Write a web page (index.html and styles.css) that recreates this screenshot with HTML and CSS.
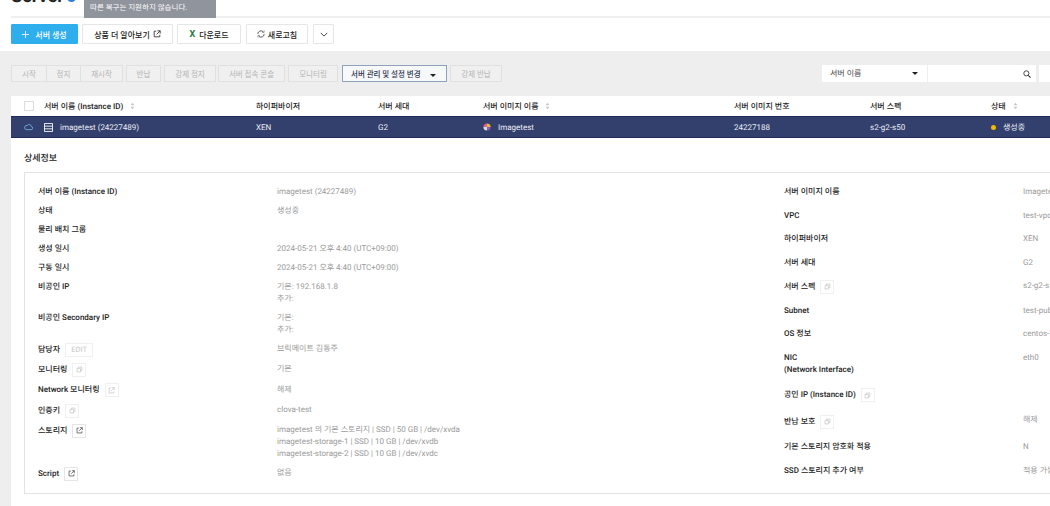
FILE: index.html
```html
<!DOCTYPE html>
<html lang="ko">
<head>
    <meta charset="UTF-8">
    <meta name="viewport" content="width=device-width, initial-scale=1.0">
    <title>Server</title>
    <link rel="stylesheet" href="styles.css">
</head>
<body>
    <svg class="sprites" aria-hidden="true">
        <symbol id="ext" viewBox="0 0 10 10"><path d="M4 1.500H1.500v7h7V6M5.500 1h3.500v3.500M9 1 4.500 5.500" fill="none" stroke="currentColor" stroke-width="1"/></symbol>
        <symbol id="copy" viewBox="0 0 10 10"><path d="M1.500 3.500h5v5h-5zM3.500 3.500v-2h5v5h-2" fill="none" stroke="currentColor" stroke-width="1"/></symbol>
        <symbol id="sort" viewBox="0 0 6 10"><path d="M3 1 5.500 4h-5zM3 9 .5 6h5z" fill="currentColor"/></symbol>
    </svg>

    <div class="page">
        <header class="top">
            <h1 class="title">Server <span class="info-dot"></span></h1>
            <div class="tooltip">
                <p>따른 복구는 지원하지 않습니다.</p>
            </div>
        </header>

        <div class="toolbar">
            <button class="btn btn-primary">
                <svg class="plus" viewBox="0 0 10 10"><path d="M5 0v10M0 5h10" stroke="#fff" stroke-width="1.200"/></svg>서버 생성
            </button>
            <button class="btn btn-wide">상품 더 알아보기 <svg class="icon"><use href="#ext"/></svg></button>
            <button class="btn btn-down"><span class="excel">X</span> 다운로드</button>
            <button class="btn btn-refresh">
                <svg class="icon" viewBox="0 0 10 10"><path d="M1 5a4 4 0 0 1 6.800-2.800M9 5a4 4 0 0 1-6.800 2.800" fill="none" stroke="#333" stroke-width="1"/><path d="M6.500 3h2.400V.6M3.500 7H1.100v2.400" fill="none" stroke="#333" stroke-width=".6"/></svg>새로고침
            </button>
            <button class="btn btn-more">
                <svg class="chevron" viewBox="0 0 10 6"><path d="M1 1l4 4 4-4" fill="none" stroke="#333" stroke-width="1.100"/></svg>
            </button>
        </div>

        <main class="content">
            <div class="actions">
                <div class="group">
                    <button class="act act-start">시작</button>
                    <button class="act act-stop">정지</button>
                    <button class="act act-restart">재시작</button>
                </div>
                <button class="act act-return">반납</button>
                <button class="act act-force">강제 정지</button>
                <button class="act act-console">서버 접속 콘솔</button>
                <button class="act act-monitor">모니터링</button>
                <button class="act act-manage">서버 관리 및 설정 변경 <span class="caret"></span></button>
                <button class="act act-force-return">강제 반납</button>
                <div class="search">
                    <div class="search-select">서버 이름 <span class="caret"></span></div>
                    <div class="search-input">
                        <svg class="search-icon" viewBox="0 0 10 10"><circle cx="4.200" cy="4.200" r="3.200" fill="none" stroke="#333" stroke-width="1.100"/><path d="M6.600 6.600 9.500 9.500" stroke="#333" stroke-width="1.300"/></svg>
                    </div>
                    <div class="search-extra"></div>
                </div>
            </div>

            <div class="table-row table-head">
                <span class="check-cell"><span class="checkbox"></span></span>
                <span>서버 이름 (Instance ID) <svg class="sort"><use href="#sort"/></svg></span>
                <span>하이퍼바이저</span>
                <span>서버 세대</span>
                <span>서버 이미지 이름 <svg class="sort"><use href="#sort"/></svg></span>
                <span>서버 이미지 번호</span>
                <span>서버 스펙</span>
                <span>상태 <svg class="sort"><use href="#sort"/></svg></span>
            </div>
            <div class="table-row table-selected">
                <span class="check-cell">
                    <svg class="cloud" viewBox="0 0 12 10"><path d="M3 8.500h6.500a2 2 0 0 0 .3-4A3 3 0 0 0 4.300 3 2.800 2.800 0 0 0 3 8.500z" fill="none" stroke="#7cc6ee" stroke-width="1"/></svg>
                </span>
                <span class="name-cell">
                    <svg class="server" viewBox="0 0 10 10"><path d="M.5.500h9v9h-9zM.5 3.500h9M.5 6.500h9" fill="none" stroke="#fff" stroke-width="1"/></svg>
                    imagetest (24227489)
                </span>
                <span>XEN</span>
                <span>G2</span>
                <span class="image-cell">
                    <svg class="os" viewBox="0 0 10 10">
                        <path d="M5 5V.5A4.500 4.500 0 0 1 9.500 5z" fill="#e8b93a"/>
                        <path d="M5 5h4.500A4.500 4.500 0 0 1 5 9.500z" fill="#8a5bb5"/>
                        <path d="M5 5v4.500A4.500 4.500 0 0 1 .5 5z" fill="#d9d9d9"/>
                        <path d="M5 5H.5A4.500 4.500 0 0 1 5 .5z" fill="#d9628a"/>
                    </svg>
                    Imagetest
                </span>
                <span>24227188</span>
                <span>s2-g2-s50</span>
                <span class="status-cell"><span class="status-dot"></span>생성중</span>
            </div>

            <section class="detail">
                <h2 class="detail-title">상세정보</h2>
                <div class="detail-box">
                    <dl class="info info-left">
                        <dt>서버 이름 (Instance ID)</dt><dd>imagetest (24227489)</dd>
                        <dt>상태</dt><dd>생성중</dd>
                        <dt>물리 배치 그룹</dt><dd></dd>
                        <dt>생성 일시</dt><dd>2024-05-21 오후 4:40 (UTC+09:00)</dd>
                        <dt>구동 일시</dt><dd>2024-05-21 오후 4:40 (UTC+09:00)</dd>
                        <dt>비공인 IP</dt><dd>기본: 192.168.1.8<br>추가:</dd>
                        <dt>비공인 Secondary IP</dt><dd>기본:<br>추가:</dd>
                        <dt>담당자 <span class="mini mini-edit">EDIT</span></dt><dd>브릭메이트 김동주</dd>
                        <dt>모니터링 <span class="mini"><svg class="mini-icon"><use href="#copy"/></svg></span></dt><dd>기본</dd>
                        <dt>Network 모니터링 <span class="mini"><svg class="mini-icon"><use href="#ext"/></svg></span></dt><dd>해제</dd>
                        <dt>인증키 <span class="mini"><svg class="mini-icon"><use href="#copy"/></svg></span></dt><dd>clova-test</dd>
                        <dt>스토리지 <span class="mini mini-dark"><svg class="mini-icon"><use href="#ext"/></svg></span></dt><dd>imagetest 의 기본 스토리지 | SSD | 50 GB | /dev/xvda<br>imagetest-storage-1 | SSD | 10 GB | /dev/xvdb<br>imagetest-storage-2 | SSD | 10 GB | /dev/xvdc</dd>
                        <dt>Script <span class="mini mini-dark"><svg class="mini-icon"><use href="#ext"/></svg></span></dt><dd>없음</dd>
                    </dl>
                    <dl class="info info-right">
                        <dt>서버 이미지 이름</dt><dd>Imagetest</dd>
                        <dt>VPC</dt><dd>test-vpc</dd>
                        <dt>하이퍼바이저</dt><dd>XEN</dd>
                        <dt>서버 세대</dt><dd>G2</dd>
                        <dt>서버 스펙 <span class="mini"><svg class="mini-icon"><use href="#copy"/></svg></span></dt><dd>s2-g2-s50</dd>
                        <dt>Subnet</dt><dd>test-public</dd>
                        <dt>OS 정보</dt><dd>centos-7.8</dd>
                        <dt>NIC<br>(Network Interface)</dt><dd>eth0</dd>
                        <dt>공인 IP (Instance ID) <span class="mini mini-tall"><svg class="mini-icon"><use href="#copy"/></svg></span></dt><dd></dd>
                        <dt>반납 보호 <span class="mini mini-tall"><svg class="mini-icon"><use href="#copy"/></svg></span></dt><dd>해제</dd>
                        <dt>기본 스토리지 암호화 적용</dt><dd>N</dd>
                        <dt>SSD 스토리지 추가 여부</dt><dd>적용 가능</dd>
                    </dl>
                </div>
            </section>
        </main>
    </div>
</body>
</html>
```

FILE: styles.css
```css
* {
    box-sizing: border-box;
}
html, body {
    margin: 0;
    height: 100%;
    overflow: hidden;
}
body {
    font-family: Roboto, "Noto Sans CJK KR", sans-serif;
    font-size: 8px;
    color: #222;
    background: #fff;
    text-rendering: geometricPrecision;
}
button {
    font-family: inherit;
    padding: 0;
    cursor: pointer;
}
.sprites {
    display: none;
}
.page {
    width: 1050px;
    height: 506px;
    overflow: hidden;
}

/* top title bar, cut off by the window */
.top {
    display: flow-root;
    position: relative;
    height: 18px;
    margin-left: 11px;
    border-bottom: 2px solid #f0f0f0;
}
.title {
    margin: -13px 0 0;
    font-size: 18px;
    line-height: 20px;
    font-weight: 700;
    color: #222;
}
.info-dot {
    display: inline-block;
    width: 9px;
    height: 9px;
    margin-left: -1px;
    border-radius: 50%;
    background: #2f7fd6;
}
.tooltip {
    position: absolute;
    left: 73px;
    top: 0;
    width: 132px;
    height: 18px;
    padding-left: 6px;
    background: #8f949d;
    color: #fff;
    font-size: 7.5px;
}
.tooltip p {
    margin: 2px 0 0;
    line-height: 12px;
}

/* main toolbar */
.toolbar {
    display: flex;
    height: 33px;
    padding: 6px 0 0 11px;
    gap: 4px;
}
.btn {
    display: flex;
    align-items: center;
    justify-content: center;
    height: 20px;
    background: #fff;
    border: 1px solid #e6e6e6;
    border-radius: 1px;
    font-size: 8px;
    font-weight: 500;
    color: #222;
}
.btn-primary {
    width: 67px;
    background: #2eaeec;
    border-color: #2eaeec;
    color: #fff;
}
.plus {
    width: 7px;
    height: 7px;
    margin-right: 6px;
}
.btn-wide {
    width: 91px;
}
.btn-wide .icon {
    margin-left: 3px;
}
.btn-down {
    width: 64px;
}
.excel {
    margin-right: 4px;
    color: #1f7a3f;
    font-weight: 700;
    font-size: 9px;
}
.btn-refresh {
    width: 62px;
    margin-left: 1px;
}
.btn-refresh .icon {
    margin-right: 3px;
}
.btn-more {
    width: 21px;
    margin-left: 1px;
}
.chevron {
    width: 8px;
    height: 5px;
}
.icon {
    width: 8px;
    height: 8px;
}

.content {
    background: #eeeeee;
    height: 455px;
    padding-left: 11px;
}

/* disabled action buttons */
.actions {
    display: flex;
    align-items: flex-start;
    height: 45px;
    padding-top: 14px;
    gap: 3px;
}
.group {
    display: flex;
}
.act {
    height: 17px;
    background: #f0f0f0;
    border: 1px solid #e0e0e0;
    font-size: 7.5px;
    color: #b5b5b5;
}
.act-start { width: 36px; }
.act-stop { width: 35px; margin-left: -1px; }
.act-restart { width: 43px; margin-left: -1px; }
.act-return { width: 35px; }
.act-force { width: 52px; }
.act-console { width: 67px; margin-left: -1px; }
.act-monitor { width: 50px; }
.act-manage {
    width: 105px;
    margin-left: 1px;
    padding-left: 8px;
    text-align: left;
    background: #f7f8fa;
    border-color: #8ea2bc;
    color: #2c3550;
    font-weight: 500;
}
.act-manage .caret {
    margin-left: 8px;
}
.act-force-return { width: 52px; }
.caret {
    display: inline-block;
    width: 0;
    height: 0;
    border-left: 3px solid transparent;
    border-right: 3px solid transparent;
    border-top: 3px solid #222;
    vertical-align: middle;
}
.search {
    display: flex;
    margin-left: auto;
    height: 17px;
}
.search-select {
    display: flex;
    align-items: center;
    justify-content: space-between;
    width: 105px;
    padding: 0 9px 0 8px;
    background: #fff;
    font-size: 8px;
    color: #444;
}
.search-input {
    display: flex;
    align-items: center;
    justify-content: flex-end;
    width: 108px;
    margin-left: 1px;
    padding-right: 5px;
    background: #fff;
}
.search-icon {
    width: 8px;
    height: 8px;
}
.search-extra {
    width: 11px;
    margin-left: 3px;
    background: #fff;
}

/* server table */
.table-row {
    display: grid;
    grid-template-columns: 33px 212px 122px 105px 251px 136px 121px 1fr;
    align-items: center;
    white-space: nowrap;
}
.table-head {
    height: 20px;
    background: #fff;
    font-weight: 500;
    color: #222;
}
.check-cell {
    display: flex;
    align-items: center;
    padding-left: 13px;
}
.checkbox {
    width: 10px;
    height: 10px;
    background: #fff;
    border: 1px solid #ddd;
}
.sort {
    width: 5px;
    height: 8px;
    margin-left: 5px;
    color: #c8c8c8;
    vertical-align: -1px;
}
.table-selected {
    height: 22px;
    background: #33406e;
    border-top: 1px solid #1f2c5a;
    border-bottom: 1px solid #1f2c5a;
    color: #eceef5;
}
.cloud {
    width: 9px;
    height: 8px;
}
.name-cell,
.image-cell,
.status-cell {
    display: flex;
    align-items: center;
}
.server {
    width: 9px;
    height: 9px;
    margin-right: 7px;
}
.os {
    width: 8px;
    height: 8px;
    margin-right: 7px;
}
.status-dot {
    width: 5px;
    height: 5px;
    margin-right: 7px;
    border-radius: 50%;
    background: #f5b800;
}

/* detail panel */
.detail {
    height: 368px;
    padding: 14px 0 0 13px;
    background: #fff;
}
.detail-title {
    margin: 0;
    height: 20px;
    font-size: 9px;
    line-height: 14px;
    font-weight: 500;
    color: #222;
}
.detail-box {
    display: flex;
    height: 322px;
    padding: 13px 0 0 13px;
    border: 1px solid #e3e3e3;
    border-right: 0;
}
.info {
    display: grid;
    flex: none;
    margin: 0;
    align-content: start;
    align-items: start;
    line-height: 12px;
}
.info-left {
    width: 746px;
    grid-template-columns: 239px 1fr;
    row-gap: 7px;
}
.info-right {
    width: 300px;
    grid-template-columns: 239px 1fr;
    row-gap: 11.5px;
}
.info dt {
    display: flex;
    flex-wrap: wrap;
    align-items: center;
    gap: 0 5px;
    font-weight: 500;
    color: #222;
}
.info dd {
    margin: 0;
    color: #9a9a9a;
    white-space: nowrap;
}
.mini {
    display: inline-flex;
    align-items: center;
    justify-content: center;
    height: 14px;
    min-width: 14px;
    margin: -.35px 0;
    border: 1px solid #f0f0f0;
    color: #c4c4c4;
}
.mini-tall {
    margin: .7px 0;
}
.mini-edit {
    width: 28px;
    font-weight: 400;
    font-size: 7.5px;
}
.mini-dark {
    color: #444;
    border-color: #e6e6e6;
}
.mini-icon {
    width: 7px;
    height: 7px;
}
```
